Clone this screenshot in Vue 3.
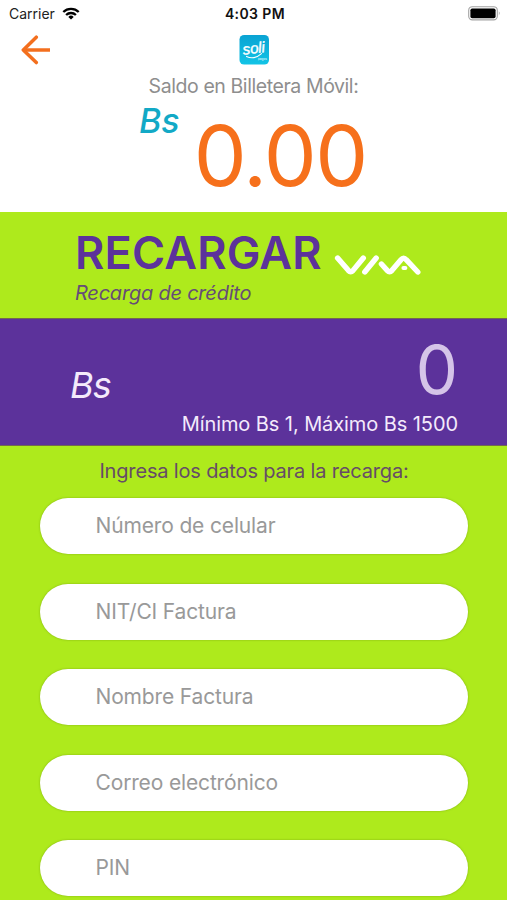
<template>
  <div class="screen">
    <header class="top">
      <div class="status-bar">
        <div class="carrier">
          <span>Carrier</span>
          <svg class="wifi" viewBox="0 0 18 13" fill="none" stroke="#000" stroke-width="2.3">
            <path d="M1.3 5 A11 11 0 0 1 16.7 5" />
            <path d="M4.1 8 A7 7 0 0 1 13.9 8" />
            <path d="M9 12.6 L6.3 9.9 A3.9 3.9 0 0 1 11.7 9.9 Z" fill="#000" stroke="none" />
          </svg>
        </div>
        <span class="clock">4:03 PM</span>
        <div class="battery">
          <svg viewBox="0 0 33 15">
            <rect x="0.7" y="0.7" width="28.6" height="13.2" rx="3.6" fill="#fff" stroke="#a3a3a3" stroke-width="1.1" />
            <rect x="2.4" y="2.4" width="25.2" height="9.8" rx="1.8" fill="#000" />
            <path d="M30.9 5.2 Q32.6 7.3 30.9 9.4 Z" fill="#8c8c8c" />
          </svg>
        </div>
      </div>

      <nav class="nav">
        <button class="back" type="button" aria-label="Volver">
          <svg viewBox="0 0 30 30" fill="none" stroke="#f36f1e" stroke-width="3.5" stroke-linecap="round" stroke-linejoin="round">
            <path d="M15.3 2.2 L2.3 15 L15.3 27.6" />
            <path d="M2.8 15 H29" stroke-linecap="butt" />
          </svg>
        </button>
        <svg class="logo" viewBox="0 0 30 30">
          <defs>
            <linearGradient id="soli" x1="0" y1="0" x2="0" y2="1">
              <stop offset="0" stop-color="#0aa3d3" />
              <stop offset="1" stop-color="#12c4e6" />
            </linearGradient>
          </defs>
          <rect x="0.5" width="29.5" height="29.5" rx="4.6" fill="url(#soli)" />
          <text x="4" y="18.4" class="logo-text" textLength="22" transform="rotate(-7 15 16)">soli</text>
          <path d="M7.5 21.4 Q15 25.2 22.5 18.6" fill="none" stroke="#fff" stroke-width="1.1" stroke-linecap="round" />
          <text x="19" y="25" class="logo-sub">pagos</text>
        </svg>
      </nav>

      <p class="balance-label">Saldo en Billetera Móvil:</p>
      <div class="balance">
        <span class="currency">Bs</span>
        <span class="amount">0.00</span>
      </div>
    </header>

    <section class="title-block">
      <div class="title-row">
        <h1>RECARGAR</h1>
        <svg class="viva" viewBox="0 0 88 22" fill="none" stroke="#fff" stroke-width="5.4" stroke-linecap="round" stroke-linejoin="round">
          <path d="M3.6 4 L14.5 16.6 Q16.7 19 18.9 16.6 L29.3 4" />
          <path d="M30.8 18 L42.2 4" />
          <path d="M47.4 10 L53.4 16.6 Q55.6 19 57.8 16.6 L67 5.7 Q69.6 2.6 72.2 5.7 L83.8 18" />
          <path d="M69.4 14 H71.4" stroke-width="4" />
        </svg>
      </div>
      <p class="subtitle">Recarga de crédito</p>
    </section>

    <section class="amount-block">
      <div class="amount-row">
        <span class="amount-currency">Bs</span>
        <span class="amount-value">0</span>
      </div>
      <p class="limits">Mínimo Bs 1, Máximo Bs 1500</p>
    </section>

    <form class="form" @submit.prevent>
      <p class="form-title">Ingresa los datos para la recarga:</p>
      <input
        v-for="field in fields"
        :key="field.name"
        v-model="form[field.name]"
        class="field"
        :type="field.type"
        :placeholder="field.label"
      >
    </form>
  </div>
</template>

<script setup>
import { reactive } from 'vue';

const fields = [
  { name: 'phone', type: 'tel', label: 'Número de celular' },
  { name: 'nit', type: 'text', label: 'NIT/CI Factura' },
  { name: 'billName', type: 'text', label: 'Nombre Factura' },
  { name: 'email', type: 'email', label: 'Correo electrónico' },
  { name: 'pin', type: 'password', label: 'PIN' },
];

const form = reactive({ phone: '', nit: '', billName: '', email: '', pin: '' });
</script>

<style>
body { margin: 0; background: #aeea1c; }
</style>

<style scoped>
.screen { width: 100%; height: 900px; overflow: hidden; background: #aeea1c; font-family: Inter, "Liberation Sans", sans-serif; }
p, h1 { margin: 0; font-weight: 400; }
svg { display: block; }

/* Header */
.top { height: 212px; background: #fff; }
.status-bar { display: grid; grid-template-columns: 1fr auto 1fr; align-items: center; height: 27px; padding: 0 6px 0 9px; font-size: 14px; line-height: 27px; color: #222; }
.carrier { display: flex; align-items: center; gap: 7px; }
.wifi { width: 18px; height: 13px; }
.clock { font-weight: 600; color: #111; letter-spacing: 0.4px; }
.battery { display: flex; justify-content: flex-end; }
.battery svg { width: 33px; height: 15px; }

.nav { display: grid; grid-template-columns: 1fr auto 1fr; align-items: center; height: 46px; padding: 0 20px; }
.back { width: 30px; height: 30px; margin-left: 1px; padding: 0; border: 0; background: none; }
.logo { width: 30px; height: 30px; }
.logo-text { font-family: "Liberation Sans", sans-serif; font-style: italic; font-weight: 400; font-size: 15px; fill: #fff; stroke: #fff; stroke-width: 0.4px; }
.logo-sub { font-size: 3px; fill: #fff; }

.balance-label { margin-top: 1px; text-align: center; font-size: 19.5px; line-height: 25px; letter-spacing: -0.42px; color: #8e8e8e; }
.balance { display: flex; align-items: flex-start; padding-left: 139px; }
.currency { margin-top: 2px; font-size: 34px; line-height: 40px; font-style: italic; font-weight: 500; color: #12a9c6; }
.amount { margin: 12px 0 0 14px; font-size: 84px; line-height: 90px; letter-spacing: -1.4px; color: #f6701b; }

/* Title */
.title-block { height: 106px; padding: 13px 75px 0; box-sizing: border-box; color: #5c329b; }
.title-row { display: flex; align-items: center; }
h1 { width: 247px; font-size: 45px; line-height: 56px; font-weight: 600; letter-spacing: 0.2px; white-space: nowrap; }
.viva { width: 88px; height: 22px; margin: 23px 0 0 12px; flex: none; }
.subtitle { font-size: 20px; line-height: 25px; font-style: italic; letter-spacing: -0.22px; color: #664c77; }

/* Amount */
.amount-block { height: 128px; padding: 16px 49px 0 70px; box-sizing: border-box; background: #5c329b; border-top: 1px solid #73684f; border-bottom: 1px solid #73684f; color: #f4eafb; }
.amount-row { display: flex; justify-content: space-between; height: 76px; }
.amount-currency { margin-top: 30px; font-size: 36px; line-height: 40px; font-style: italic; letter-spacing: -0.8px; }
.amount-value { font-size: 67px; line-height: 69px; font-weight: 400; color: #d5c4e8; }
.limits { text-align: right; font-size: 20px; line-height: 26px; letter-spacing: -0.08px; }

/* Form */
.form { display: flex; flex-direction: column; align-items: center; padding: 12px 39px 0 40px; }
.form-title { margin-bottom: 14px; font-size: 20px; line-height: 26px; letter-spacing: -0.16px; color: #664c67; }
.field { width: 100%; height: 56px; margin-bottom: 29.5px; padding: 0 55.5px 1px; box-sizing: border-box; flex: none; border: 0; border-radius: 28px; background: #fff; box-shadow: 0 0 2px rgba(80, 110, 0, 0.5); font-family: inherit; font-size: 21px; letter-spacing: -0.15px; outline: none; }
.field::placeholder { color: #999; opacity: 1; }
</style>
